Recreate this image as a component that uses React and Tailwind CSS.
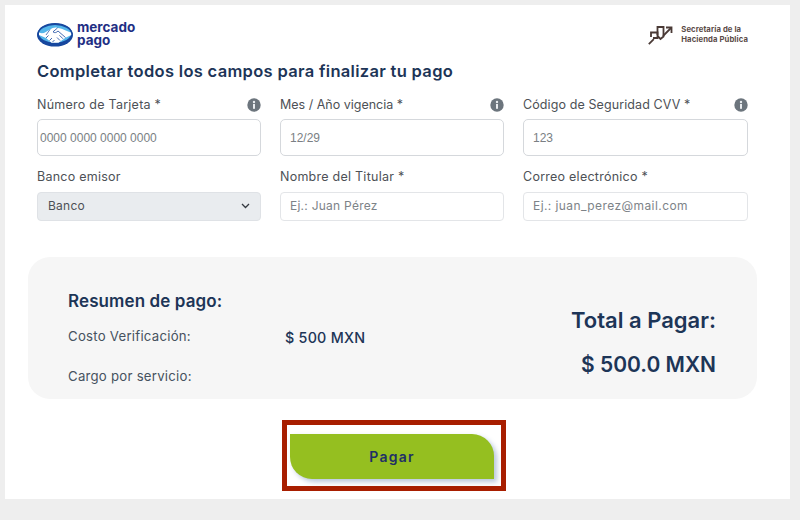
import React from "react";

const font = { fontFamily: "Inter, 'Liberation Sans', sans-serif" };

function Info() {
  return (
    <svg width="14" height="14" viewBox="0 0 14 14" className="shrink-0">
      <circle cx="7" cy="7" r="6.7" fill="#6c757d" />
      <rect x="6" y="6" width="2" height="4.8" fill="#e9ecef" />
      <circle cx="7" cy="4" r="1.2" fill="#e9ecef" />
    </svg>
  );
}

function Logo() {
  return (
    <div className="flex items-center gap-[4px]">
      <svg width="36" height="25" viewBox="0 0 36 25">
        <ellipse cx="18" cy="13" rx="18" ry="11.500" fill="#17479e" />
        <ellipse cx="18" cy="11.500" rx="17" ry="10.500" fill="#17479e" />
        <ellipse cx="18" cy="11.800" rx="16" ry="8.700" fill="#55b6ea" />
        <path d="M2 10.500C6 12.500 9 10 13 7.500c2.500-1.500 5-2.500 7.500-1.500 2.500-.5 9 3 13.500 4.500l.3 2.500-5.800 2.800-7 5H14.500L9 16l-7-3Z" fill="#ffffff" />
        <path d="M20.500 6l-4.500 3.800c1.500 1.500 3.500.8 5-.8l7.500 6.500M9 16l2.500-2.500M12.500 18.500l2.500-2.500M15.500 20l2-2M23 18.500l-3-3M26 16.800l-3.500-3.500" fill="none" stroke="#17479e" strokeWidth="0.800" />
        <path d="M9 13l4-5.500" fill="none" stroke="#17479e" strokeWidth="0.700" />
      </svg>
      <div className="flex flex-col text-[13.500px] leading-[13px] font-bold text-[#1f2f84] mt-[-1px]">
        <span>mercado</span>
        <span>pago</span>
      </div>
    </div>
  );
}

function Hacienda() {
  return (
    <div className="flex items-center gap-[8px]">
      <svg width="25" height="20" viewBox="0 0 25 20" fill="none" stroke="#4a3a36" strokeWidth="1.800">
        <path d="M0.800 19.200l5-5" />
        <path d="M3 12V7.500h6.500V13H5" />
        <path d="M9.500 10V2h6v9.500l-3 2.500-3-3" />
        <path d="M15 11l8-8" />
        <path d="M18 2.500h5.500V8" />
      </svg>
      <div className="flex flex-col text-[7.700px] leading-[9.500px] font-bold text-[#5a4a46] tracking-[0.1px]">
        <span>Secretaría de la</span>
        <span>Hacienda Pública</span>
      </div>
    </div>
  );
}

function Field({ label, info, children, labelClass = "tracking-[0.25px]" }) {
  return (
    <div className="flex flex-col min-w-0">
      <div className={"flex items-center justify-between text-[12.500px] leading-[16px] text-[#4d5156] " + labelClass}>
        <span>{label}</span>
        {info && <Info />}
      </div>
      {children}
    </div>
  );
}

function Big({ value, pad = "pl-[9px]" }) {
  return (
    <div
      className={"h-[37px] mt-[6px] border border-[#d5d8dc] rounded-[5px] bg-white flex items-center text-[12px] text-[#7a7f84] " + pad}
      style={{ fontFamily: "'Liberation Sans', sans-serif" }}
    >
      {value}
    </div>
  );
}

function Small({ value, spacing = "tracking-[0.25px]" }) {
  return (
    <div className={"h-[29px] mt-[7px] border border-[#e3e5e8] rounded-[4px] bg-white flex items-center pl-[9px] pb-[1px] text-[12px] text-[#7d8388] " + spacing}>
      {value}
    </div>
  );
}

export default function App() {
  return (
    <div className="w-[800px] h-[520px] bg-[#eeeeee] pt-[5px] pl-[5px] overflow-hidden" style={font}>
      <div className="w-[785px] h-[494px] bg-white flex flex-col pt-[17px]">
        <div className="flex justify-between items-center pl-[32px] pr-[42px] h-[25px]">
          <Logo />
          <Hacienda />
        </div>

        <h1 className="pl-[32px] mt-[14px] text-[16.500px] leading-[20px] font-semibold text-[#1d3557] tracking-[0.31px]">
          Completar todos los campos para finalizar tu pago
        </h1>

        <div className="ml-[32px] mt-[16px] grid grid-cols-[224px_224px_225px] gap-x-[19px]">
          <Field label="Número de Tarjeta *" info><Big value="0000 0000 0000 0000" pad="pl-[2px]" /></Field>
          <Field label="Mes / Año vigencia *" info labelClass="tracking-[0px]"><Big value="12/29" /></Field>
          <Field label="Código de Seguridad CVV *" info labelClass="tracking-[0.1px]"><Big value="123" /></Field>
        </div>

        <div className="ml-[32px] mt-[13px] grid grid-cols-[224px_224px_225px] gap-x-[19px]">
          <Field label="Banco emisor">
            <div className="h-[29px] mt-[7px] rounded-[4px] bg-[#e9ecef] border border-[#dfe2e6] flex items-center justify-between pl-[10px] pr-[10px] pb-[1px] text-[12px] text-[#4d5156] tracking-[0.25px]">
              <span>Banco</span>
              <svg width="9" height="6" viewBox="0 0 9 6" fill="none" stroke="#343a40" strokeWidth="1.300">
                <path d="M1 1l3.500 3.500L8 1" />
              </svg>
            </div>
          </Field>
          <Field label="Nombre del Titular *"><Small value="Ej.: Juan Pérez" /></Field>
          <Field label="Correo electrónico *"><Small value="Ej.: juan_perez@mail.com" spacing="tracking-[0.42px]" /></Field>
        </div>

        <div className="ml-[23px] mt-[36px] w-[729px] h-[142px] rounded-[22px] bg-[#f6f6f6] flex justify-between pl-[40px] pr-[41px]">
          <div className="pt-[34px]">
            <div className="text-[17px] leading-[20px] font-semibold text-[#1d3557] tracking-[0.1px]">Resumen de pago:</div>
            <div className="flex mt-[17px]">
              <div className="w-[217px] text-[13.200px] leading-[16px] text-[#46525f] tracking-[0.25px]">Costo Verificación:</div>
              <div className="text-[14.300px] leading-[16px] mt-[2px] font-medium text-[#1d3557] tracking-[0.25px]">$ 500 MXN</div>
            </div>
            <div className="mt-[22px] text-[13.200px] leading-[16px] text-[#46525f] tracking-[0.25px]">Cargo por servicio:</div>
          </div>
          <div className="flex flex-col items-end pt-[50px]">
            <div className="text-[22px] leading-[26px] font-semibold text-[#1d3557]">Total a Pagar:</div>
            <div className="mt-[19px] text-[21px] leading-[26px] font-semibold text-[#1d3557]">$ 500.0 MXN</div>
          </div>
        </div>

        <div className="mt-[21px] ml-[277px] w-[224px] h-[71px] border-[5px] border-[#a81e00] flex items-center pl-[3px]">
          <div className="w-[204px] h-[45px] mt-[2px] bg-[#95bf20] rounded-tr-[22px] rounded-bl-[22px] shadow-[3px_3px_5px_rgba(100,130,180,0.45)] flex items-center justify-center text-[14px] font-semibold text-[#1f2f66] tracking-[1.200px]">
            Pagar
          </div>
        </div>
      </div>
    </div>
  );
}
